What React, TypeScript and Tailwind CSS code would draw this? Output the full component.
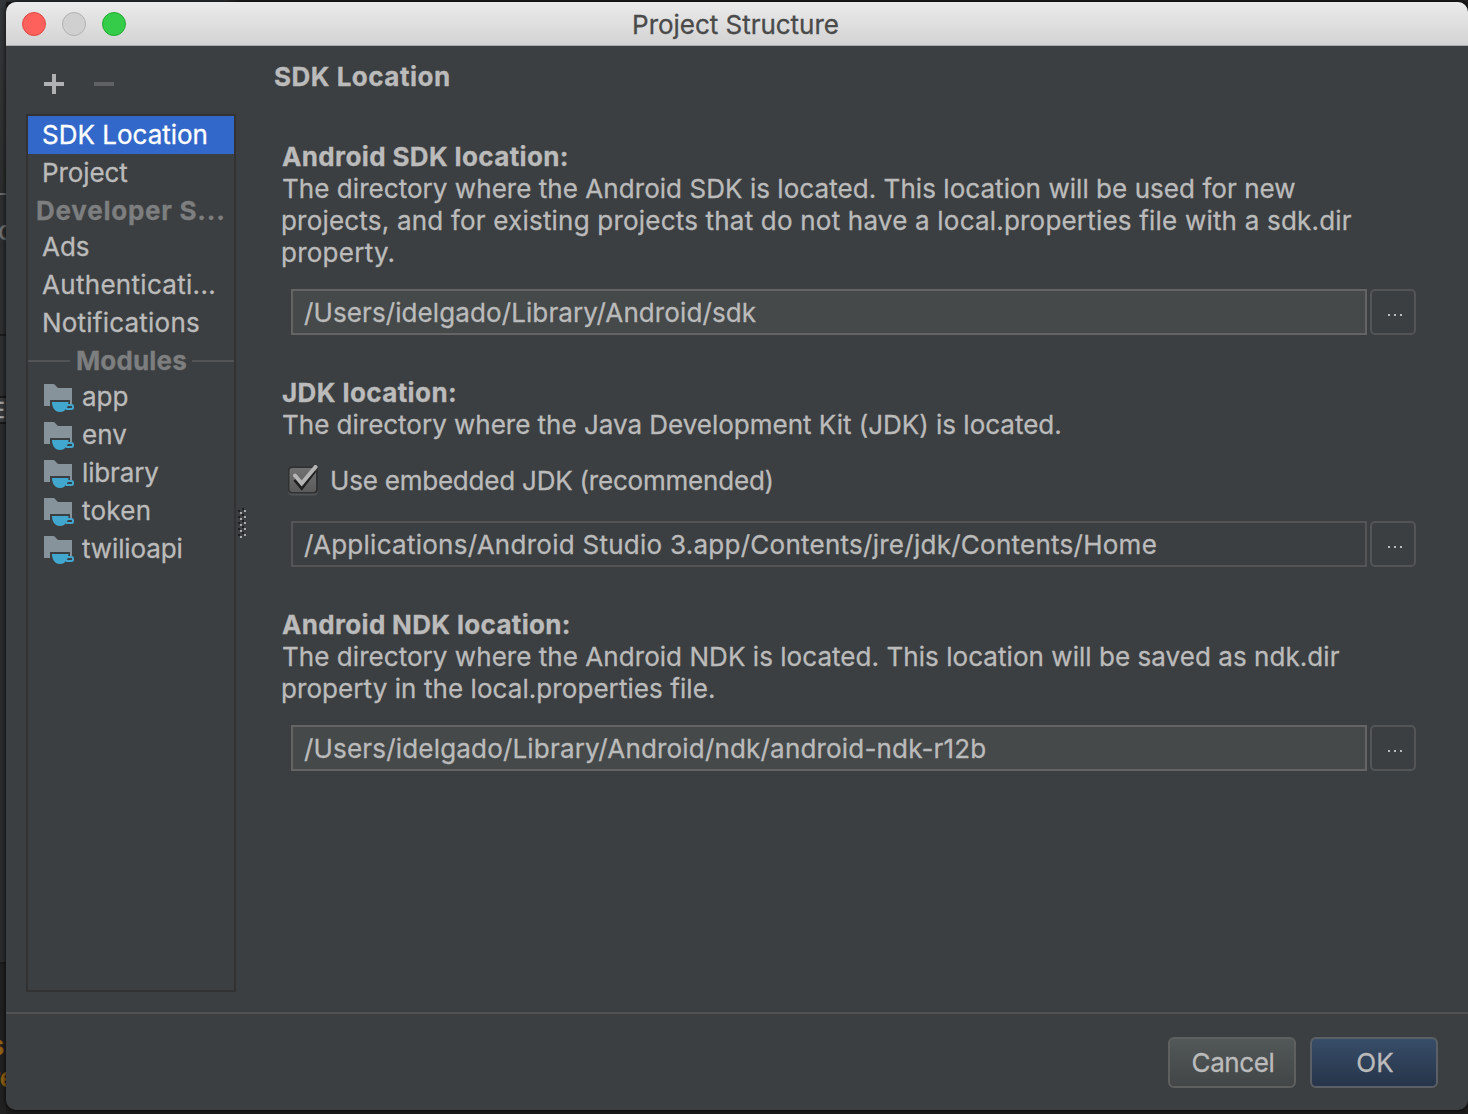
import type { ReactNode } from "react";

const entries = [
  { label: "SDK Location", className: "bg-[#3268ca] text-white" },
  { label: "Project", className: "tracking-[-0.1px]" },
];

const services = [
  { label: "Ads", className: "pl-[14px]" },
  { label: "Authenticati...", className: "pl-[14px] tracking-[0.3px]" },
  { label: "Notifications", className: "pl-[14px] tracking-[0.22px]" },
];

const modules = [
  { label: "app", className: "" },
  { label: "env", className: "" },
  { label: "library", className: "tracking-[-0.15px]" },
  { label: "token", className: "tracking-[0.25px]" },
  { label: "twilioapi", className: "tracking-[-0.1px]" },
];

function ModuleIcon() {
  return (
    <svg width="30" height="28" viewBox="0 0 30 28" className="mt-[6px] shrink-0">
      <path d="M0 0h10l4 4h14v16h-2v-4H6v6H0z" fill="#87939a" />
      <path d="M8 18h16.500c0 2.500-.8 5-2.500 7-1.500 2-3 3-6 3s-4.500-1-6-3c-1.300-2-2-4.500-2-7z" fill="#41a7ce" />
      <path d="M23 21h4.500q1.500 0 1.500 1.500v1q0 1.500-1.500 1.500H22" fill="none" stroke="#41a7ce" strokeWidth="2" />
    </svg>
  );
}

function SplitterGrip() {
  return (
    <svg width="8" height="30" viewBox="0 0 8 30" shapeRendering="crispEdges">
      {[0, 6, 12, 18, 24].map((y) => (
        <g key={y}>
          <path d={`M4 ${y}h2v2h-2zM0 ${y + 2}h2v2h-2z`} fill="#1e1f20" />
          <path d={`M6 ${y + 2}h2v2h-2zM2 ${y + 4}h2v2h-2z`} fill="#a8a8a8" />
        </g>
      ))}
    </svg>
  );
}

function PathRow({ children, disabled = false, className = "" }: { children: ReactNode; disabled?: boolean; className?: string }) {
  return (
    <div className="ml-[10px] flex h-[46px] gap-[3px]">
      <div
        className={`w-[1076px] border-2 pl-[11px] leading-[44px] whitespace-pre ${
          disabled ? "border-[#555555]" : "border-[#646464] bg-[#45494a]"
        } ${className}`}
      >
        {children}
      </div>
      <button className="flex w-[46px] justify-center gap-[4px] rounded-[5px] border-2 border-[#535557] pt-[23px] pl-[4px]">
        <span className="size-[2px] bg-[#bbbbbb]" />
        <span className="size-[2px] bg-[#bbbbbb]" />
        <span className="size-[2px] bg-[#bbbbbb]" />
      </button>
    </div>
  );
}

function Sidebar() {
  return (
    <aside className="ml-[20px] w-[210px] shrink-0">
      <div className="flex h-[68px] pt-[28px] pl-[18px]">
        <svg width="70" height="20" viewBox="0 0 70 20" shapeRendering="crispEdges">
          <path d="M8 0h4v8h8v4h-8v8H8v-8H0V8h8z" fill="#afb1b3" />
          <path d="M50 8h20v4H50z" fill="#606162" />
        </svg>
      </div>
      <div className="h-[878px] border-2 border-[#323232] leading-[38px] whitespace-pre">
        {entries.map((e) => (
          <div key={e.label} className={`h-[38px] pl-[14px] ${e.className}`}>
            {e.label}
          </div>
        ))}
        <div className="h-[36px] pl-[8px] font-bold tracking-[0.75px] text-[#7d7e7f]">Developer S...</div>
        {services.map((e) => (
          <div key={e.label} className={`h-[38px] ${e.className}`}>
            {e.label}
          </div>
        ))}
        <div className="flex h-[36px] items-start text-[#7d7e7f]">
          <span className="mt-[18px] h-[2px] w-[42px] bg-[#515354]" />
          <span className="w-[122px] pl-[6px] font-bold tracking-[0.15px]">Modules</span>
          <span className="mt-[18px] h-[2px] w-[42px] bg-[#515354]" />
        </div>
        {modules.map((m) => (
          <div key={m.label} className="flex h-[38px] gap-[8px] pl-[16px]">
            <ModuleIcon />
            <span className={m.className}>{m.label}</span>
          </div>
        ))}
      </div>
    </aside>
  );
}

function SdkLocationPanel() {
  return (
    <main className="ml-[30px] leading-[32px] whitespace-pre">
      <h1 className="-ml-[2px] pt-[15px] font-bold tracking-[0.5px]">SDK Location</h1>

      <section className="pt-[48px]">
        <h2 className="pl-[6px] font-bold tracking-[0.37px]">Android SDK location:</h2>
        <p className="pl-[6px] tracking-[0.05px]">The directory where the Android SDK is located. This location will be used for new</p>
        <p className="pl-[5px] tracking-[0.2px]">projects, and for existing projects that do not have a local.properties file with a sdk.dir</p>
        <p className="pl-[5px] tracking-[0.25px]">property.</p>
        <div className="pt-[20px] pl-[5px]">
          <PathRow className="tracking-[0.1px]">/Users/idelgado/Library/Android/sdk</PathRow>
        </div>
      </section>

      <section className="pt-[42px]">
        <h2 className="pl-[6px] font-bold tracking-[0.4px]">JDK location:</h2>
        <p className="pl-[6px] tracking-[-0.01px]">The directory where the Java Development Kit (JDK) is located.</p>
        <div className="flex h-[80px] items-start gap-[12px] pt-[24px] pl-[10px]">
          <svg width="32" height="32" viewBox="0 0 32 32">
            <defs>
              <linearGradient id="box" x1="0" y1="0" x2="0" y2="1">
                <stop offset="0" stopColor="#717171" />
                <stop offset="1" stopColor="#5b5b5b" />
              </linearGradient>
            </defs>
            <rect x="2" y="4" width="30" height="26.500" rx="4" fill="#505253" />
            <rect x="2" y="1.500" width="30" height="27" rx="4" fill="#303132" />
            <rect x="3.500" y="3" width="26.500" height="24" rx="3" fill="url(#box)" />
            <path d="M9 14.500l6.700 8L29 5" fill="none" stroke="#1f1f1f" strokeWidth="4" />
            <path d="M9 10.500l6.700 8L29.500 2" fill="none" stroke="#b5b5b5" strokeWidth="4" strokeLinecap="round" />
          </svg>
          <span className="tracking-[-0.21px]">Use embedded JDK (recommended)</span>
        </div>
        <div className="pl-[5px]">
          <PathRow disabled className="tracking-[0.26px]">
            /Applications/Android Studio 3.app/Contents/jre/jdk/Contents/Home
          </PathRow>
        </div>
      </section>

      <section className="pt-[42px]">
        <h2 className="pl-[6px] font-bold tracking-[0.33px]">Android NDK location:</h2>
        <p className="pl-[6px] tracking-[0.05px]">The directory where the Android NDK is located. This location will be saved as ndk.dir</p>
        <p className="pl-[5px] tracking-[0.07px]">property in the local.properties file.</p>
        <div className="pt-[20px] pl-[5px]">
          <PathRow className="tracking-[0.18px]">/Users/idelgado/Library/Android/ndk/android-ndk-r12b</PathRow>
        </div>
      </section>
    </main>
  );
}

/* Sliver of the editor window that stays visible beside the dialog. */
function EditorEdge() {
  return (
    <div className="flex w-[6px] shrink-0 flex-col overflow-hidden text-[26px] whitespace-pre">
      <div className="h-[193px] shrink-0 bg-linear-to-b from-[#35383a] to-[#2b2d2e]" />
      <div className="h-[2px] shrink-0 bg-[#67696a]" />
      <div className="h-[139px] shrink-0 bg-[#2d2f30] pt-[20px] leading-[32px] text-[#6f7173]">
        <span className="-ml-[2px]">c</span>
      </div>
      <div className="h-[62px] shrink-0 border-t-2 border-[#1c1c1c] bg-[#2d2f30]" />
      <div className="h-[28px] shrink-0 border-y-2 border-[#191919] bg-[#37393b] text-[22px] leading-[24px] text-[#a5a5a5]">
        <span className="-ml-[8px]">E</span>
      </div>
      <div className="h-[538px] shrink-0 bg-[#2a2c2e]" />
      <div className="grow border-t-2 border-[#1b1b1b] bg-[#212121] pt-[66px] leading-[32px] font-semibold text-[#936013]">
        <div className="-ml-[10px]">s</div>
        <div className="-ml-[10px]">re</div>
      </div>
    </div>
  );
}

export default function App() {
  return (
    <div className="flex h-[1114px] w-[1468px] overflow-hidden bg-[#1d1c1c] font-['Inter',sans-serif] text-[26px] text-[#bbbbbb] [-webkit-text-stroke:0.3px]">
      <EditorEdge />
      <div className="flex grow flex-col">
        <div className="h-[2px] shrink-0 bg-linear-to-r from-[#303234] from-15% to-[#211f1f] to-16%" />
        <div className="flex h-[1108px] w-[1462px] flex-col overflow-hidden rounded-[10px] bg-[#3c3f41] shadow-[0_0_4px_1px_#000000a0]">
          <header className="grid h-[44px] shrink-0 grid-cols-3 border-b border-[#adadad] bg-linear-to-b from-[#ebebeb] to-[#d3d3d3]">
            <div className="flex gap-[16px] pt-[10px] pl-[16px]">
              <span className="size-[24px] rounded-full border border-[#e04b45] bg-[#fe605b]" />
              <span className="size-[24px] rounded-full border border-[#b2b2b2] bg-[#d0d0d0]" />
              <span className="size-[24px] rounded-full border border-[#23ab34] bg-[#34cc48]" />
            </div>
            <div className="pr-[3px] text-center leading-[45px] tracking-[-0.03px] text-[#4a4a4a]">Project Structure</div>
          </header>
          <div className="flex h-[966px] shrink-0">
            <Sidebar />
            <div className="flex w-[10px] shrink-0 pt-[462px] pl-[2px]">
              <SplitterGrip />
            </div>
            <SdkLocationPanel />
          </div>
          <footer className="flex grow justify-end gap-[14px] border-t-2 border-[#515151] pt-[23px] pr-[30px]">
            <button className="h-[51px] w-[128px] rounded-[6px] border-2 border-[#5e6060] bg-linear-to-b from-[#525758] to-[#424647] pl-[2px] tracking-[-0.4px]">
              Cancel
            </button>
            <button className="h-[51px] w-[128px] rounded-[6px] border-2 border-[#5b6066] bg-linear-to-b from-[#384d69] to-[#263549] pl-[2px]">
              OK
            </button>
          </footer>
        </div>
      </div>
    </div>
  );
}
